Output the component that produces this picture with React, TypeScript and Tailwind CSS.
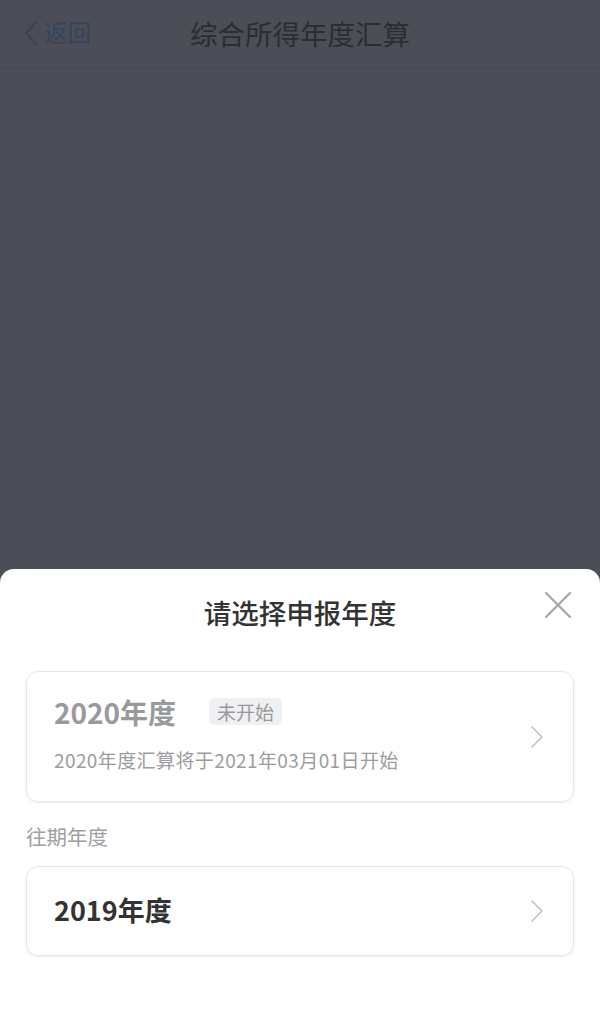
import React from "react"

const font = { fontFamily: '"Noto Sans CJK SC", "Noto Sans", sans-serif' }

const Chevron = () => (
    <svg width="14" height="24" viewBox="0 0 14 24" fill="none">
        <path d="M2 2 L12 12 L2 22" stroke="#c4c4c6" strokeWidth="1.6" strokeLinecap="round" strokeLinejoin="round" />
    </svg>
)

const App = () => {
    return (
        <div className="w-[600px] h-[1027px] bg-[#4b4e56] flex flex-col overflow-hidden" style={font}>
            {/* header under the overlay */}
            <div className="h-[69px] border-b border-[#44474f] flex items-center relative">
                <div className="absolute left-[22px] top-[19px] flex items-center">
                    <svg width="18" height="28" viewBox="0 0 18 28" fill="none">
                        <path d="M14 3 L4 14 L14 25" stroke="#34435e" strokeWidth="2.6" strokeLinecap="round" strokeLinejoin="round" />
                    </svg>
                    <span className="text-[23.5px] text-[#34435e] ml-[4px] leading-none">返回</span>
                </div>
                <div className="w-full text-center text-[27.5px] text-[#2a2d33] leading-none">综合所得年度汇算</div>
            </div>

            <div className="flex-1" />

            {/* bottom sheet */}
            <div className="h-[458px] bg-white rounded-t-[14px] flex flex-col px-[26px] relative">
                <div className="h-[86px] flex items-center justify-center text-[27.5px] font-medium text-[#333333] pt-[1px]">
                    请选择申报年度
                </div>
                <svg className="absolute right-[28px] top-[22px]" width="28" height="28" viewBox="0 0 28 28" fill="none">
                    <path d="M2 2 L26 26 M26 2 L2 26" stroke="#a9a9ab" strokeWidth="2.4" strokeLinecap="round" />
                </svg>

                <div className="mt-[16px] h-[131px] rounded-[12px] border border-[#e6e6e8] shadow-[0_1px_3px_rgba(0,0,0,0.08)] flex items-center pl-[27px] pr-[29px]">
                    <div className="flex-1 flex flex-col pb-[7px]">
                        <div className="flex items-center">
                            <span className="text-[28px] font-bold text-[#9a9a9c] leading-none">2020年度</span>
                            <span className="ml-[33px] h-[27px] px-[8px] rounded-[5px] bg-[#eef0f3] text-[19px] text-[#999999] flex items-center leading-none">未开始</span>
                        </div>
                        <div className="mt-[24px] text-[19px] text-[#9c9c9e] leading-none tracking-[0.4px]">2020年度汇算将于2021年03月01日开始</div>
                    </div>
                    <Chevron />
                </div>

                <div className="mt-[24px] text-[20.5px] text-[#a0a0a2] leading-none">往期年度</div>

                <div className="mt-[19px] h-[90px] rounded-[12px] border border-[#e6e6e8] shadow-[0_1px_3px_rgba(0,0,0,0.08)] flex items-center pl-[27px] pr-[29px]">
                    <span className="flex-1 text-[27px] font-bold text-[#333333] leading-none pb-[3px]">2019年度</span>
                    <Chevron />
                </div>
            </div>
        </div>
    )
}

export default App
